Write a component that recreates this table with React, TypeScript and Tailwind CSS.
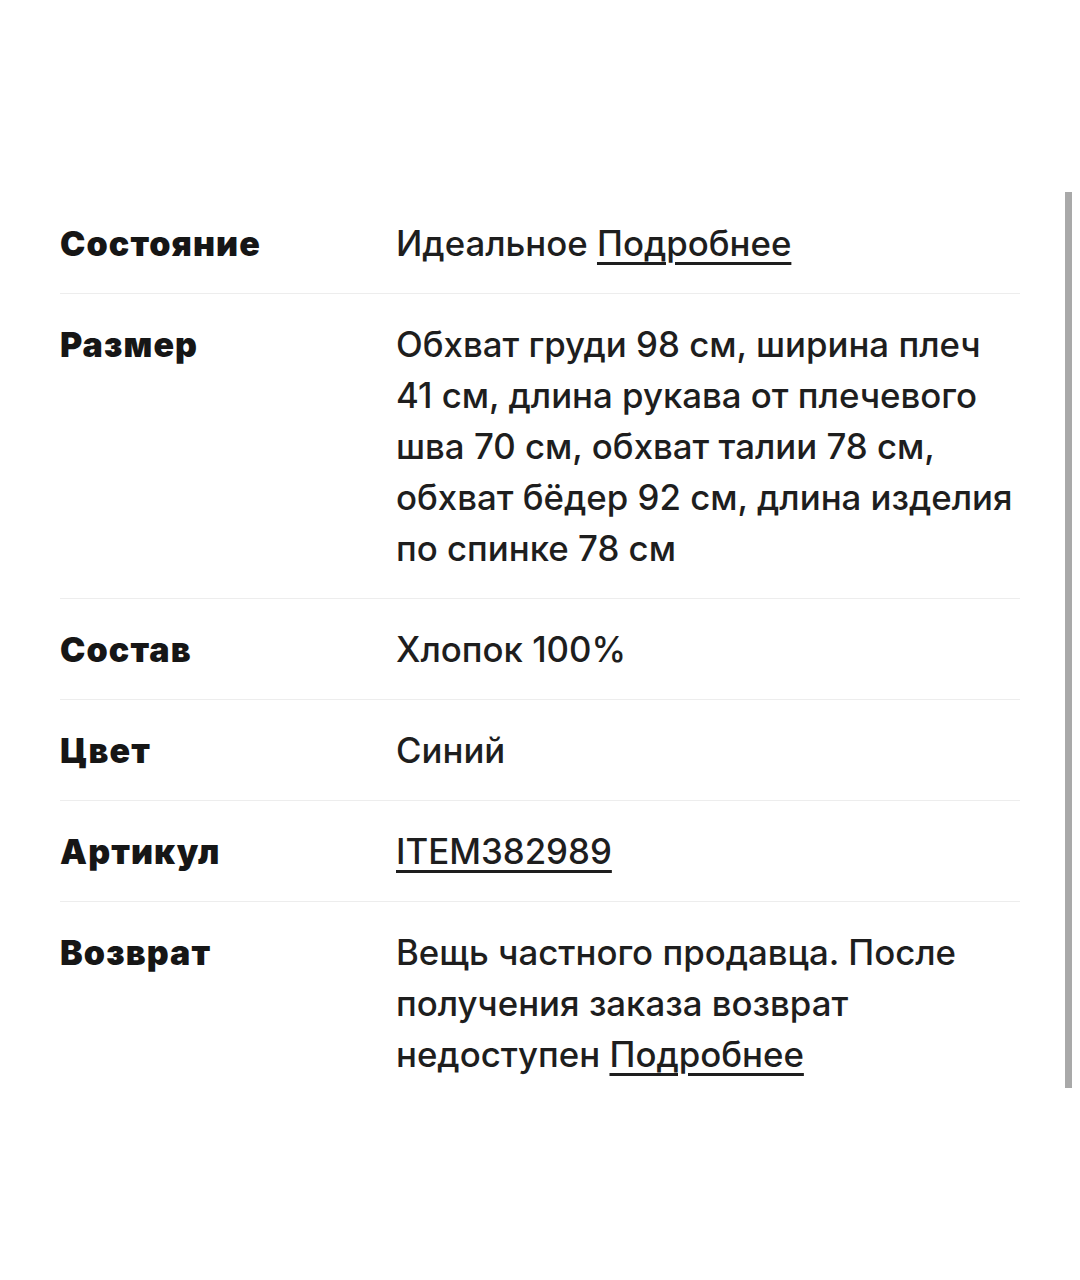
import React from 'react'

interface Row {
    label: string
    value: React.ReactNode
}

const link = 'underline decoration-[3px] underline-offset-[6px]'

const rows: Row[] = [
    {
        label: 'Состояние',
        value: (
            <>
                Идеальное <span className={link}>Подробнее</span>
            </>
        ),
    },
    {
        label: 'Размер',
        value: (
            <>
                Обхват груди 98 см, ширина плеч
                <br />
                41 см, длина рукава от плечевого
                <br />
                шва 70 см, обхват талии 78 см,
                <br />
                обхват бёдер 92 см, длина изделия
                <br />
                по спинке 78 см
            </>
        ),
    },
    { label: 'Состав', value: 'Хлопок 100%' },
    { label: 'Цвет', value: 'Синий' },
    { label: 'Артикул', value: <span className={link}>ITEM382989</span> },
    {
        label: 'Возврат',
        value: (
            <>
                Вещь частного продавца. После
                <br />
                получения заказа возврат
                <br />
                недоступен <span className={link}>Подробнее</span>
            </>
        ),
    },
]

export default function App() {
    return (
        <div className="relative w-[1080px] h-[1280px] bg-white overflow-hidden">
            <div className="pt-[193px] px-[60px] w-[1080px]">
                {rows.map((row, i) => (
                    <div
                        key={`row_${i}`}
                        className={`grid grid-cols-[336px_1fr] pt-[25px] pb-[24px] ${i < rows.length - 1 ? 'border-b border-[#ededed]' : ''}`}
                    >
                        <p className="m-0 font-['Inter',sans-serif] font-black text-[34px] leading-[51px] text-[#161616] tracking-[1.1px]">
                            {row.label}
                        </p>
                        <p className="m-0 font-['Inter',sans-serif] font-medium text-[34.8px] leading-[51px] text-[#1e1e1e] whitespace-nowrap">
                            {row.value}
                        </p>
                    </div>
                ))}
            </div>
            <div className="absolute left-[1065px] top-[192px] w-[7px] h-[896px] bg-[#a9a9a9]" />
        </div>
    )
}
